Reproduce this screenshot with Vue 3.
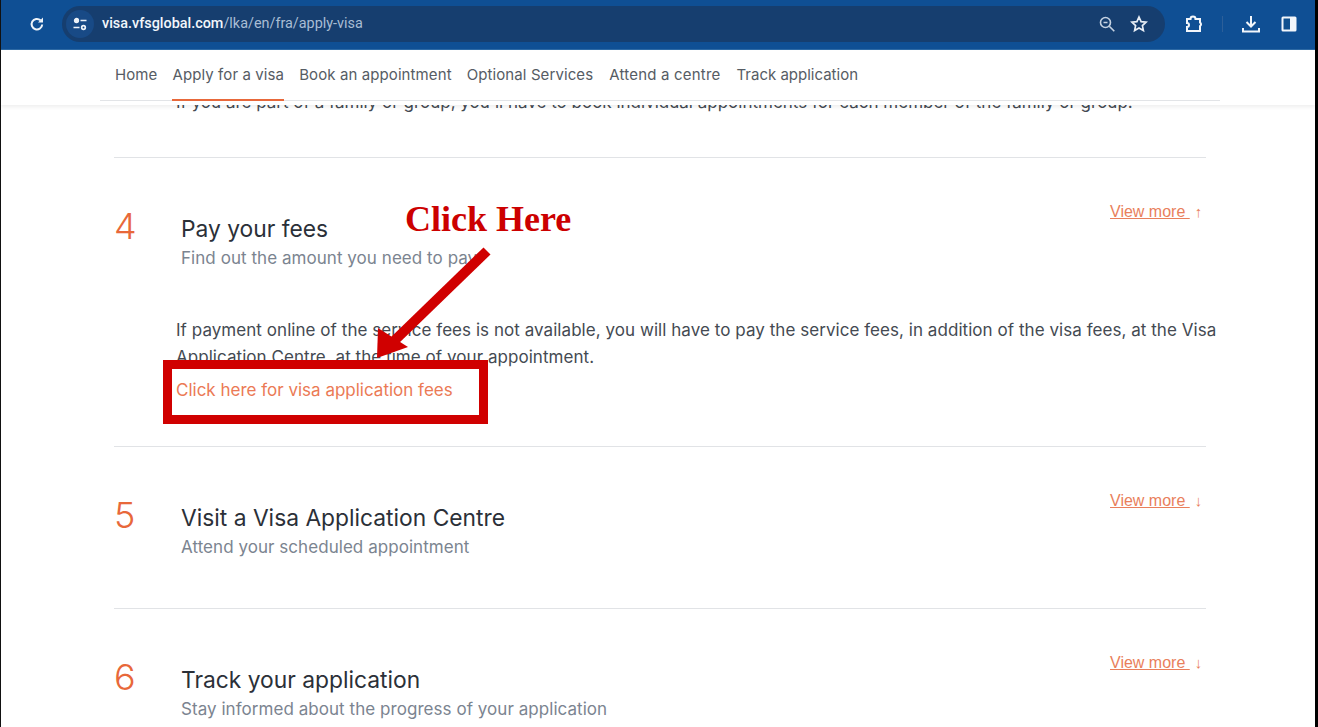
<script setup>
const steps = [
  {
    num: 4,
    title: 'Pay your fees',
    sub: 'Find out the amount you need to pay',
    arrow: '↑',
    open: true
  },
  {
    num: 5,
    title: 'Visit a Visa Application Centre',
    sub: 'Attend your scheduled appointment',
    arrow: '↓'
  },
  {
    num: 6,
    title: 'Track your application',
    sub: 'Stay informed about the progress of your application',
    arrow: '↓'
  }
]

const navItems = ['Home', 'Apply for a visa', 'Book an appointment', 'Optional Services', 'Attend a centre', 'Track application']
</script>

<template>
  <div class="screen">
    <div class="toolbar">
      <svg class="reload" width="16" height="16" viewBox="0 0 16 16" fill="none">
        <path d="M13.200 8.500a5.300 5.300 0 1 1-1.700-4.200" stroke="#eef3f9" stroke-width="2" />
        <path d="M14 1.500v5h-5z" fill="#eef3f9" />
      </svg>
      <div class="address">
        <span class="tune">
          <svg width="16" height="14" viewBox="0 0 16 14" fill="none" stroke="#eef3f9" stroke-width="1.7">
            <circle cx="4.500" cy="3.500" r="1.800" fill="#eef3f9" />
            <path d="M8.500 3.500h6M1.500 10.500h6" />
            <circle cx="11.500" cy="10.500" r="1.800" />
          </svg>
        </span>
        <span class="url"><b>visa.vfsglobal.com</b>/lka/en/fra/apply-visa</span>
        <svg class="zoom-icon" width="18" height="18" viewBox="0 0 18 18" fill="none" stroke="#c5d2e2" stroke-width="1.600">
          <circle cx="7.500" cy="7.500" r="5" />
          <path d="M5.500 7.500h4M11.300 11.300l5 5" />
        </svg>
        <svg class="star" width="18" height="18" viewBox="0 0 18 18" fill="none" stroke="#e8eef6" stroke-width="1.700">
          <path d="M9 2l2.100 4.600 5 .6-3.700 3.400 1 5L9 13.100l-4.400 2.500 1-5L1.900 7.200l5-.6z" />
        </svg>
      </div>
      <svg class="puzzle" width="20" height="20" viewBox="0 0 20 20" fill="none" stroke="#f2f6fb" stroke-width="2">
        <path d="M3 5h3.500a2.500 2.500 0 0 1 5 0H16v3.500a2 2 0 0 1 0 3.500v5H3v-4a2 2 0 0 0 0-4z" />
      </svg>
      <span class="divider"></span>
      <svg class="download" width="20" height="20" viewBox="0 0 20 20" fill="none" stroke="#f2f6fb" stroke-width="2">
        <path d="M10 2v10M5.500 8l4.500 4.500L14.500 8M2 14v3.500h16V14" />
      </svg>
      <svg class="side" width="16" height="16" viewBox="0 0 16 16">
        <rect x="0.500" y="0.500" width="15" height="15" rx="1.500" fill="#f2f6fb" />
        <rect x="2.500" y="2.500" width="6.500" height="11" fill="#10508f" />
      </svg>
    </div>

    <header class="site-nav">
      <nav class="nav-inner">
        <a v-for="(item, i) in navItems" :key="item" :class="{ active: i === 1 }">{{ item }}</a>
      </nav>
    </header>

    <main class="content">
      <p class="cut-line">If you are part of a family or group, you'll have to book individual appointments for each member of the family or group.</p>
      <hr class="rule first" />

      <template v-for="(step, i) in steps" :key="step.num">
        <section class="step" :class="{ open: step.open }">
          <div class="num">{{ step.num }}</div>
          <div class="text">
            <h3>{{ step.title }}</h3>
            <p class="sub">{{ step.sub }}</p>
          </div>
          <a class="more"><span class="more-label">View more&nbsp;</span><span class="more-arrow">{{ step.arrow }}</span></a>
        </section>
        <div v-if="step.open" class="detail">
          <p>If payment online of the service fees is not available, you will have to pay the service fees, in addition of the visa fees, at the Visa<br />Application Centre, at the time of your appointment.</p>
          <a class="fee-link">Click here for visa application fees</a>
        </div>
        <hr v-if="i < steps.length - 1" class="rule" />
      </template>
    </main>

    <!-- annotation painted over the screenshot -->
    <div class="note">Click Here</div>
    <svg class="arrow" width="200" height="200" viewBox="0 0 200 200">
      <path d="M127 8L33 99" stroke="#d00000" stroke-width="10" fill="none" />
      <path d="M17 115L18 85L48 104z" fill="#d00000" />
    </svg>
    <div class="box"></div>
  </div>
</template>

<style scoped>
.screen {
  position: relative;
  width: 1318px;
  height: 727px;
  overflow: hidden;
  background: #fff;
  font-family: Inter, "Noto Sans", sans-serif;
  box-sizing: border-box;
  border-left: 1px solid #111;
  border-right: 3px solid #000;
  display: flex;
  flex-direction: column;
}

/* browser chrome */
.toolbar {
  flex: none;
  background: #0f4f94;
  display: flex;
  align-items: center;
  padding: 0 0 2px 28px;
  color: #fff;
  border-bottom: 1px solid #2e6aa6;
  box-sizing: border-box;
  height: 50px;
}
.reload {
  flex: none;
}
.address {
  width: 1103px;
  height: 36px;
  margin-left: 17px;
  border-radius: 18px;
  background: #163e6f;
  display: flex;
  align-items: center;
  flex: none;
}
.tune {
  width: 28px;
  height: 28px;
  margin-left: 4px;
  border-radius: 14px;
  background: #184a86;
  display: flex;
  align-items: center;
  justify-content: center;
}
.url {
  margin-left: 8px;
  font-size: 14.4px;
  color: #a9bdd4;
  font-family: Roboto, sans-serif;
  flex: 1;
}
.url b {
  font-weight: 500;
  color: #f2f6fb;
}
.zoom-icon {
  margin-right: 14px;
}
.star {
  margin-right: 17px;
}
.puzzle {
  margin-left: 19px;
}
.divider {
  width: 1px;
  height: 16px;
  background: #2c5f99;
  margin-left: 18px;
}
.download {
  margin-left: 18px;
}
.side {
  margin-left: 20px;
}

/* site header */
.site-nav {
  flex: none;
  height: 55px;
  background: #fff;
  box-shadow: 0 2px 4px rgba(0, 0, 0, 0.07);
  position: relative;
  z-index: 2;
  padding-left: 99px;
  box-sizing: border-box;
}
.nav-inner {
  width: 1120px;
  height: 51px;
  box-sizing: border-box;
  padding-left: 15px;
  border-bottom: 1px solid #e2e4e7;
  display: flex;
  gap: 15px;
}
.nav-inner a {
  height: 51px;
  box-sizing: border-box;
  padding-top: 16px;
  font-size: 15px;
  line-height: 18px;
  color: #565c64;
  letter-spacing: 0.1px;
}
.nav-inner a.active {
  border-bottom: 2px solid #e8683a;
}
.nav-inner a:nth-child(5) {
  margin-left: 1px;
  letter-spacing: 0.2px;
}
.nav-inner a:last-child {
  margin-left: 1px;
  letter-spacing: 0px;
}

/* steps */
.content {
  flex: 1;
  min-height: 0;
  padding-left: 113px;
  width: 1092px;
  position: relative;
}
.cut-line {
  margin: -15px 0 0 62px;
  font-size: 17px;
  line-height: 24px;
  white-space: nowrap;
  color: #444a52;
}
.rule {
  border: 0;
  border-top: 1px solid #e1e3e6;
  margin: 0;
  width: 1092px;
}
.rule.first {
  margin-top: 43px;
}
.step {
  display: flex;
  width: 1092px;
  height: 106px;
  position: relative;
  padding-top: 50px;
  box-sizing: border-box;
}
.step.open {
  height: 112px;
}
.num {
  width: 67px;
  font-size: 36px;
  font-weight: 300;
  line-height: 36px;
  color: #e8683a;
}
h3 {
  margin: 6px 0 0;
  font-size: 22.8px;
  font-weight: 400;
  line-height: 30px;
  color: #2b3038;
}
.sub {
  margin: 2px 0 0;
  font-size: 17px;
  line-height: 24px;
  color: #7b8490;
  letter-spacing: 0.05px;
}
.more {
  position: absolute;
  left: 996px;
  top: 45px;
  font-size: 16px;
  line-height: 18px;
  font-family: "Liberation Sans", sans-serif;
  color: #e97f5c;
  white-space: nowrap;
}
.more-label {
  text-decoration: underline;
}
.more-arrow {
  margin-left: 5px;
  font-size: 15px;
}
.detail {
  padding: 47px 0 0 62px;
  height: 176px;
  box-sizing: border-box;
}
.detail p {
  margin: 0;
  font-size: 17px;
  line-height: 27px;
  color: #444a52;
  white-space: nowrap;
  letter-spacing: 0.05px;
}
.fee-link {
  display: block;
  margin-top: 6px;
  font-size: 17px;
  line-height: 27px;
  color: #eb7a55;
}
.step:not(.open) {
  height: 161px;
}

/* annotation */
.note {
  position: absolute;
  left: 404px;
  top: 198px;
  font-family: "Liberation Serif", serif;
  font-size: 36px;
  font-weight: 700;
  line-height: 42px;
  color: #cc0000;
  white-space: nowrap;
}
.arrow {
  position: absolute;
  left: 359px;
  top: 243px;
}
.box {
  position: absolute;
  left: 162px;
  top: 360px;
  width: 325px;
  height: 64px;
  box-sizing: border-box;
  border: 9px solid #d00000;
}
</style>

<style>
html, body {
  margin: 0;
  overflow: hidden;
}
</style>
